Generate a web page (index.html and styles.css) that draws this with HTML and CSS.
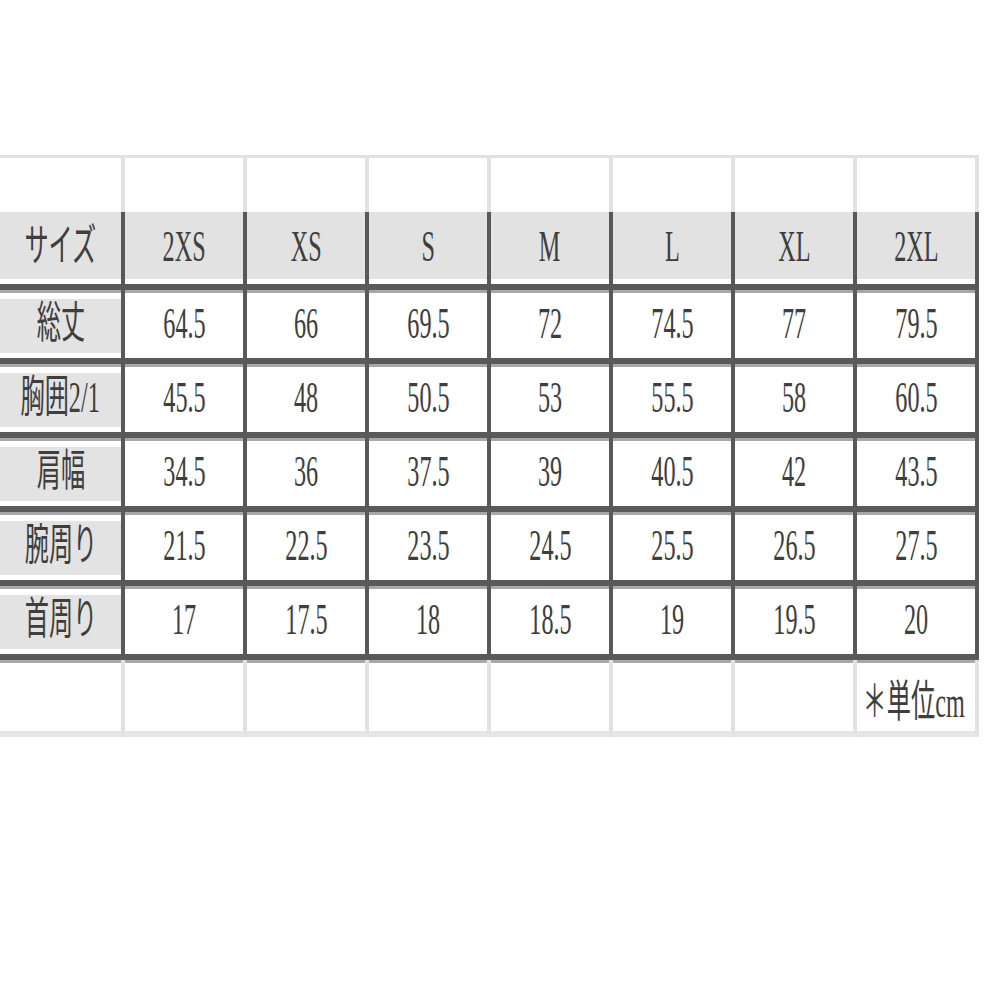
FILE: index.html
```html
<!DOCTYPE html>
<html lang="ja">
<head>
<meta charset="utf-8">
<title>サイズ表</title>
<link rel="stylesheet" href="styles.css">
</head>
<body>
<div class="chart">
  <div class="c top"></div><div class="c top"></div><div class="c top"></div><div class="c top"></div><div class="c top"></div><div class="c top"></div><div class="c top"></div><div class="c top"></div>

  <div class="c head"><span class="t">サイズ</span></div>
  <div class="c head"><span class="t">2XS</span></div>
  <div class="c head"><span class="t">XS</span></div>
  <div class="c head"><span class="t">S</span></div>
  <div class="c head"><span class="t">M</span></div>
  <div class="c head"><span class="t">L</span></div>
  <div class="c head"><span class="t">XL</span></div>
  <div class="c head"><span class="t">2XL</span></div>

  <div class="c body lbl"><span class="t">総丈</span></div>
  <div class="c body"><span class="t">64.5</span></div>
  <div class="c body"><span class="t">66</span></div>
  <div class="c body"><span class="t">69.5</span></div>
  <div class="c body"><span class="t">72</span></div>
  <div class="c body"><span class="t">74.5</span></div>
  <div class="c body"><span class="t">77</span></div>
  <div class="c body"><span class="t">79.5</span></div>

  <div class="c body lbl"><span class="t">胸囲2/1</span></div>
  <div class="c body"><span class="t">45.5</span></div>
  <div class="c body"><span class="t">48</span></div>
  <div class="c body"><span class="t">50.5</span></div>
  <div class="c body"><span class="t">53</span></div>
  <div class="c body"><span class="t">55.5</span></div>
  <div class="c body"><span class="t">58</span></div>
  <div class="c body"><span class="t">60.5</span></div>

  <div class="c body lbl"><span class="t">肩幅</span></div>
  <div class="c body"><span class="t">34.5</span></div>
  <div class="c body"><span class="t">36</span></div>
  <div class="c body"><span class="t">37.5</span></div>
  <div class="c body"><span class="t">39</span></div>
  <div class="c body"><span class="t">40.5</span></div>
  <div class="c body"><span class="t">42</span></div>
  <div class="c body"><span class="t">43.5</span></div>

  <div class="c body lbl"><span class="t">腕周り</span></div>
  <div class="c body"><span class="t">21.5</span></div>
  <div class="c body"><span class="t">22.5</span></div>
  <div class="c body"><span class="t">23.5</span></div>
  <div class="c body"><span class="t">24.5</span></div>
  <div class="c body"><span class="t">25.5</span></div>
  <div class="c body"><span class="t">26.5</span></div>
  <div class="c body"><span class="t">27.5</span></div>

  <div class="c body lbl"><span class="t">首周り</span></div>
  <div class="c body"><span class="t">17</span></div>
  <div class="c body"><span class="t">17.5</span></div>
  <div class="c body"><span class="t">18</span></div>
  <div class="c body"><span class="t">18.5</span></div>
  <div class="c body"><span class="t">19</span></div>
  <div class="c body"><span class="t">19.5</span></div>
  <div class="c body"><span class="t">20</span></div>

  <div class="c foot"></div><div class="c foot"></div><div class="c foot"></div><div class="c foot"></div><div class="c foot"></div><div class="c foot"></div><div class="c foot"></div>
  <div class="c foot note"><span class="t">＊単位cm</span></div>
</div>
</body>
</html>
```

FILE: styles.css
```css
html, body {
  margin: 0;
  padding: 0;
  background: #ffffff;
}

body {
  font-family: "Liberation Serif", "Noto Sans CJK JP", serif;
  color: #404040;
}

.chart {
  margin-top: 155px;
  width: 979px;
  display: grid;
  grid-template-columns: 125px repeat(7, 122px);
  grid-template-rows: 57px 78px repeat(5, 74px) 77px;
}

.c {
  box-sizing: border-box;
  display: flex;
  align-items: center;
  justify-content: center;
  overflow: visible;
}

.t {
  display: inline-block;
  font-size: 44px;
  line-height: 1;
  white-space: nowrap;
  transform: scaleX(0.55);
  transform-origin: center;
  color: #3e3e3e;
}

.top {
  border-top: 3px solid #e0e0e0;
  border-right: 4px solid #e2e2e2;
  background: #ffffff;
}

.head {
  background: #e2e2e2;
  border-right: 4px solid #595959;
  border-bottom: 6px solid #5a5a5a;
  box-shadow: inset 0 -5px 0 #ffffff;
  padding-bottom: 2px;
}

.body {
  background: #ffffff;
  border-right: 4px solid #595959;
  border-bottom: 6px solid #5a5a5a;
  box-shadow: inset 0 3px 0 #a8a8a8;
}

.lbl {
  background: #e3e3e3;
  box-shadow: inset 0 3px 0 #a8a8a8, inset 0 9px 0 #ffffff, inset 0 -5px 0 #ffffff;
}

.foot {
  background: #ffffff;
  border-right: 4px solid #e2e2e2;
  border-bottom: 6px solid #e6e6e6;
  box-shadow: inset 0 3px 0 #a8a8a8;
}

.note {
  justify-content: flex-end;
  padding-right: 10px;
  padding-top: 14px;
}

.note .t {
  transform-origin: right center;
}
```
